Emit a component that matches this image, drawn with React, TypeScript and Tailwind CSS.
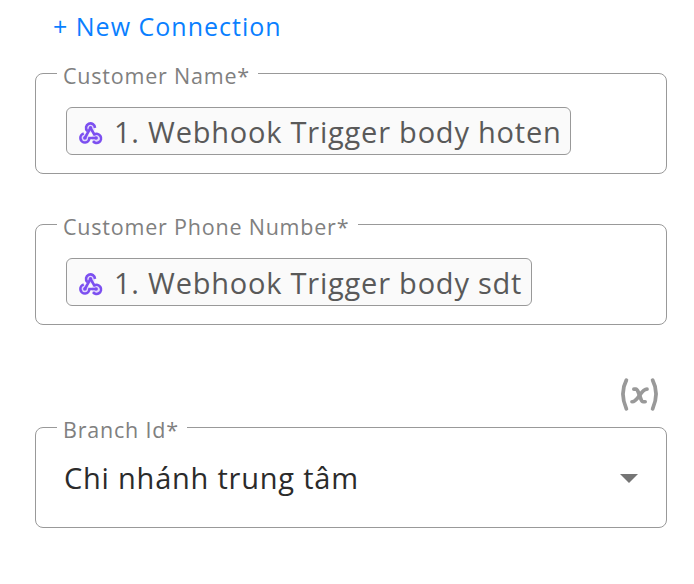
import type { ReactNode } from "react";
import { TbVariable } from "react-icons/tb";

const WebhookIcon = () => (
  <svg viewBox="0 0 24 24" className="w-[27px] h-[27px] mt-[5px] shrink-0 text-[#7c4ff0]" fill="none">
    {/* soft fill behind the rings */}
    <g fill="#e3d9fc">
      <circle cx="12" cy="7" r="4" />
      <circle cx="7" cy="16" r="4" />
      <circle cx="17" cy="16" r="4" />
    </g>
    <g stroke="currentColor" strokeWidth="2.3" strokeLinejoin="round">
      <path d="M9.2 9.9A4 4 0 1 1 16 7" />
      <path d="M12 7L7 16" />
      <path d="M6 12.1A4 4 0 1 0 11 16H17" />
      <path d="M12 7l3.4 5.9A4 4 0 1 1 14.2 18.8" />
    </g>
    <g fill="currentColor">
      <circle cx="12" cy="7" r="1.6" />
      <circle cx="7" cy="16" r="1.6" />
      <circle cx="17" cy="16" r="1.6" />
    </g>
  </svg>
);

type FieldProps = {
  label: string;
  children: ReactNode;
};

const Field = ({ label, children }: FieldProps) => (
  <fieldset className="w-[632px] h-[113px] border border-[#999999] rounded-lg pl-[21px]">
    <legend className="h-[25px] pt-1 pl-1.5 pr-[8.5px] text-[21.5px] leading-[21px] tracking-[0.79px] text-[#808080] whitespace-nowrap">
      {label}
    </legend>
    {children}
  </fieldset>
);

const MentionChip = ({ text }: { text: string }) => (
  <span className="inline-flex items-center h-12 mt-[21px] ml-[9px] pl-[9.5px] pr-[8.5px] gap-[10.5px] border border-[#999999] rounded-md bg-[#fafafa] text-[29px] tracking-[0.78px] text-[#595959] whitespace-nowrap">
    <WebhookIcon />
    <span className="leading-none">{text}</span>
  </span>
);

const App = () => {
  return (
    <div className="w-[694px] h-[584px] bg-white pl-[35px] overflow-hidden font-['Open_Sans',sans-serif]">
      <button className="block h-[61px] pl-[18px] pb-[9px] text-[25px] leading-[52px] tracking-[1px] text-[#0a7fff]">
        + New Connection
      </button>

      <Field label="Customer Name*">
        <MentionChip text="1. Webhook Trigger body hoten" />
      </Field>

      <div className="mt-[38px]">
        <Field label="Customer Phone Number*">
          <MentionChip text="1. Webhook Trigger body sdt" />
        </Field>
      </div>

      {/* Toggle for dynamic value */}
      <div className="flex justify-end w-[632px] h-[90px] pt-12 pr-[5px]">
        <TbVariable preserveAspectRatio="none" className="w-[45px] h-[43px] text-[#999999]" />
      </div>

      <Field label="Branch Id*">
        <div className="flex items-center justify-between h-[76px] pl-[7px] pr-[28px] text-[29px] tracking-[0.78px] text-[#2b2b2b]">
          <span>Chi nhánh trung tâm</span>
          <svg viewBox="0 0 18 9" className="w-[18px] h-[9px] fill-[#757575]">
            <path d="M0 0h18l-9 9z" />
          </svg>
        </div>
      </Field>
    </div>
  );
};

export default App;
